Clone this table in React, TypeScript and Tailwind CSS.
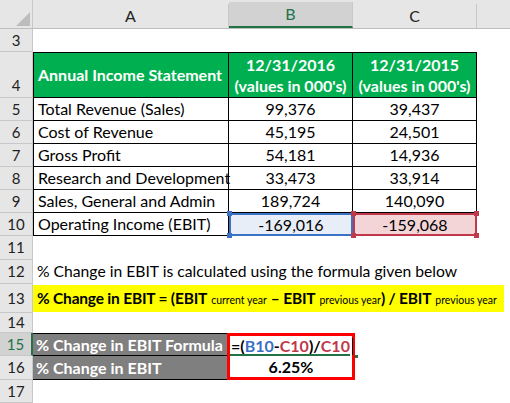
import React from "react";

const font = { fontFamily: "Lato, 'Open Sans', sans-serif" };

const rows = [
  { n: 5, label: "Total Revenue (Sales)", b: "99,376", c: "39,437" },
  { n: 6, label: "Cost of Revenue", b: "45,195", c: "24,501" },
  { n: 7, label: "Gross Profit", b: "54,181", c: "14,936" },
  { n: 8, label: "Research and Development", b: "33,473", c: "33,914" },
  { n: 9, label: "Sales, General and Admin", b: "189,724", c: "140,090" },
];

function RowHead({ n, active, bottom }: { n: number; active?: boolean; bottom?: boolean }) {
  return (
    <div
      className={`w-[33px] shrink-0 flex justify-center border-b border-r border-[#c8c8c8] text-[15px] ${
        bottom ? "items-end pb-[1px]" : "items-center"
      } ${active ? "bg-[#d2d2d2] text-[#217346] border-r-2 border-r-[#217346]" : "bg-[#e6e6e6] text-[#222]"}`}
    >
      {n}
    </div>
  );
}

function Handle({ className }: { className: string }) {
  return <span className={`absolute w-[5px] h-[5px] ${className}`} />;
}

export default function App() {
  return (
    <div className="w-[510px] h-[403px] bg-white overflow-hidden text-black" style={font}>
      {/* Column headers */}
      <div className="flex h-[29px] bg-[#e6e6e6] border-b border-[#bdbdbd]">
        <div className="w-[33px] shrink-0 relative border-r border-[#c8c8c8]">
          <div className="absolute left-[16px] top-[12px] w-0 h-0 border-l-[14px] border-l-transparent border-b-[14px] border-b-[#bdbdbd]" />
        </div>
        <div className="w-[196px] flex flex-col">
          <div className="h-[7px]" />
          <div className="flex-1 flex items-center justify-center text-[16px] text-[#222] border-r border-[#c8c8c8]">A</div>
        </div>
        <div className="w-[124px] flex flex-col">
          <div className="h-[7px]" />
          <div className="flex-1 flex items-center justify-center text-[16px] text-[#217346] bg-[#d2d2d2] border-r border-[#c8c8c8] border-b-2 border-b-[#217346]">B</div>
        </div>
        <div className="w-[124px] flex flex-col">
          <div className="h-[7px]" />
          <div className="flex-1 flex items-center justify-center text-[16px] text-[#222] border-r border-[#c8c8c8]">C</div>
        </div>
        <div className="flex-1" />
      </div>

      {/* Row 3 */}
      <div className="flex h-[23px]">
        <RowHead n={3} />
      </div>

      {/* Row 4 header */}
      <div className="flex h-[46px]">
        <RowHead n={4} bottom />
        <div className="w-[196px] bg-[#00b050] border border-black flex items-center pl-[4px] text-white font-bold text-[16px] whitespace-nowrap">
          Annual Income Statement
        </div>
        <div className="w-[124px] bg-[#00b050] border-y border-r border-black flex flex-col items-center justify-center text-white font-bold text-[16px] leading-[21px] whitespace-nowrap">
          <span>12/31/2016</span>
          <span>(values in 000's)</span>
        </div>
        <div className="w-[124px] bg-[#00b050] border-y border-r border-black flex flex-col items-center justify-center text-white font-bold text-[16px] leading-[21px] whitespace-nowrap">
          <span>12/31/2015</span>
          <span>(values in 000's)</span>
        </div>
      </div>

      {/* Rows 5-9 */}
      {rows.map((r) => (
        <div key={r.n} className="flex h-[23px]">
          <RowHead n={r.n} />
          <div className="w-[196px] border-x border-b border-black flex items-center pl-[4px] text-[16px] whitespace-nowrap">
            {r.label}
          </div>
          <div className="w-[124px] border-r border-b border-black flex items-center justify-center text-[16px]">{r.b}</div>
          <div className="w-[124px] border-r border-b border-black flex items-center justify-center text-[16px]">{r.c}</div>
        </div>
      ))}

      {/* Row 10 */}
      <div className="flex h-[23px]">
        <RowHead n={10} />
        <div className="w-[196px] border-x border-b border-black flex items-center pl-[4px] text-[16px] whitespace-nowrap">
          Operating Income (EBIT)
        </div>
        <div className="w-[124px] relative bg-[#e7eef8] border-2 border-[#3b72c6] flex items-center justify-center text-[16px]">
          -169,016
          <Handle className="bg-[#3b72c6] -left-[4px] -top-[4px]" />
          <Handle className="bg-[#3b72c6] -left-[4px] -bottom-[4px]" />
        </div>
        <div className="w-[124px] relative bg-[#f3d5d8] border-2 border-[#c0394b] flex items-center justify-center text-[16px]">
          -159,068
          <Handle className="bg-[#c0394b] -left-[4px] -top-[4px]" />
          <Handle className="bg-[#c0394b] -left-[4px] -bottom-[4px]" />
          <Handle className="bg-[#c0394b] -right-[4px] -top-[4px]" />
          <Handle className="bg-[#c0394b] -right-[4px] -bottom-[4px]" />
        </div>
      </div>

      {/* Row 11 */}
      <div className="flex h-[24px]">
        <RowHead n={11} />
      </div>

      {/* Row 12 */}
      <div className="flex h-[24px]">
        <RowHead n={12} />
        <div className="flex items-center pl-[4px] text-[15.7px] whitespace-nowrap">
          % Change in EBIT is calculated using the formula given below
        </div>
      </div>

      {/* Row 13 */}
      <div className="flex h-[29px]">
        <RowHead n={13} />
        <div className="w-[471px] my-[1px] bg-[#ffff00] flex items-center pl-[4px] whitespace-nowrap font-bold text-[15.5px] tracking-[-0.2px]">
          <span>% Change in EBIT = (EBIT</span>
          <span className="text-[10.5px] tracking-normal font-normal self-end mb-[3px] mx-[4px]">current year</span>
          <span>– EBIT</span>
          <span className="text-[10.5px] tracking-normal font-normal self-end mb-[3px] ml-[4px]">previous year</span>
          <span>) / EBIT</span>
          <span className="text-[10.5px] tracking-normal font-normal self-end mb-[3px] ml-[4px]">previous year</span>
        </div>
      </div>

      {/* Row 14 */}
      <div className="flex h-[20px]">
        <RowHead n={14} />
      </div>

      {/* Row 15 */}
      <div className="flex h-[23px]">
        <RowHead n={15} active />
        <div className="w-[194px] bg-[#7f7f7f] border-y border-black flex items-center pl-[3px] text-white font-bold text-[16px] whitespace-nowrap">
          % Change in EBIT Formula
        </div>
        <div className="w-[128px] relative flex items-center border-t-[3px] border-x-[3px] border-[#ff0000] font-bold text-[16px] pl-[1px] whitespace-nowrap">
          <span>=(</span>
          <span className="text-[#3a6fc4]">B10</span>
          <span>-</span>
          <span className="text-[#c0394b]">C10</span>
          <span>)/</span>
          <span className="text-[#c0394b]">C10</span>
          <span className="w-px h-[17px] bg-black ml-[2px]" />
          <span className="absolute left-0 right-[2px] bottom-0 h-[2px] bg-[#217346]" />
          <span className="absolute -right-[6px] -bottom-[2px] w-[3px] h-[3px] bg-[#217346]" />
        </div>
      </div>

      {/* Row 16 */}
      <div className="flex h-[24px]">
        <RowHead n={16} />
        <div className="w-[194px] bg-[#7f7f7f] border-b border-black flex items-center pl-[3px] text-white font-bold text-[16px] whitespace-nowrap">
          % Change in EBIT
        </div>
        <div className="w-[128px] flex items-center justify-center border-b-[3px] border-x-[3px] border-[#ff0000] font-bold text-[16px]">
          6.25%
        </div>
      </div>

      {/* Row 17 */}
      <div className="flex h-[23px]">
        <RowHead n={17} />
      </div>
    </div>
  );
}
